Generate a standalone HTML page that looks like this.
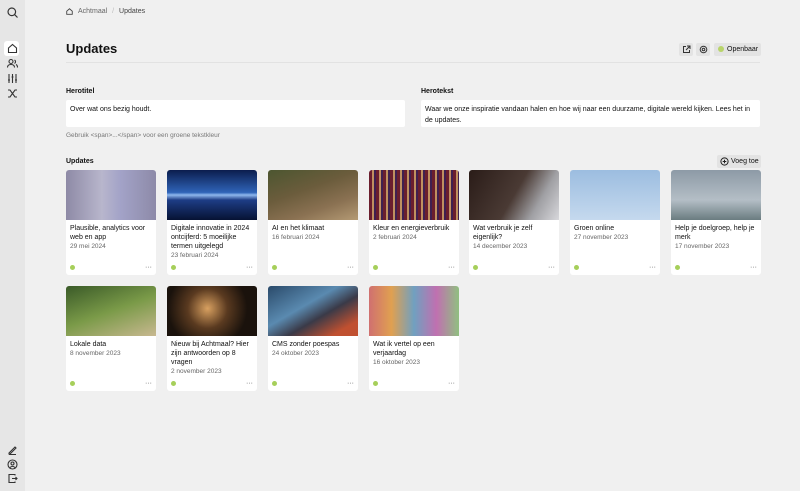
<!DOCTYPE html>
<html><head><meta charset="utf-8"><style>
*{box-sizing:border-box;margin:0;padding:0}
body{width:800px;height:491px;overflow:hidden;background:#f0f0f0;font-family:"Liberation Sans",sans-serif;color:#111;position:relative}
.sb{position:absolute;left:0;top:0;width:25px;height:491px;background:#e6e6e6}
.ic{position:absolute;left:6px;width:13px;height:13px}
.a{position:absolute}
.lbl{font-size:7px;font-weight:bold}
.inp{background:#fff;font-size:7px;line-height:11px;padding:4px 4px;border-radius:2px}
.card{position:absolute;width:90px;height:105px;background:#fff;border-radius:3px;overflow:hidden}
.card .im{height:50px}
.card .t{font-size:7px;line-height:9px;padding:4px 4px 0}
.card .d{font-size:6.5px;color:#666;padding:0 4px;line-height:9px}
.card .dot{position:absolute;left:4px;bottom:5px;width:5px;height:5px;border-radius:50%;background:#a6cf5a}
.card .m{position:absolute;right:4px;bottom:4px;font-size:7px;color:#555}
.btn{position:absolute;background:#e3e3e3;border-radius:2px;font-size:7px;line-height:13px;height:13px;white-space:nowrap}
</style></head><body>
<div class="sb">
<svg class="ic" style="top:6px" viewBox="0 0 13 13" fill="none" stroke="#333" stroke-width="1.2"><circle cx="5.8" cy="5.8" r="3.8"/><path d="M8.6 8.6L11.5 11.5"/></svg>
<div style="position:absolute;left:4px;top:41px;width:15px;height:15px;background:#fff;border-radius:3px"></div>
<svg class="ic" style="top:42px" viewBox="0 0 13 13" fill="none" stroke="#333" stroke-width="1.1"><path d="M2.5 6L6.5 2.5L10.5 6V10.5H2.5Z"/></svg>
<svg class="ic" style="top:57px" viewBox="0 0 13 13" fill="none" stroke="#333" stroke-width="1.1"><circle cx="5" cy="4.5" r="2"/><path d="M1.5 10.5c0-2 1.5-3 3.5-3s3.5 1 3.5 3M8.5 3a2 2 0 010 3.5M10 7.5c1 .5 1.5 1.5 1.5 3"/></svg>
<svg class="ic" style="top:72px" viewBox="0 0 13 13" fill="none" stroke="#333" stroke-width="1.1"><path d="M3 2v9M6.5 2v9M10 2v9M2 8h2M5.5 5h2M9 8h2"/></svg>
<svg class="ic" style="top:87px" viewBox="0 0 13 13" fill="none" stroke="#333" stroke-width="1.1"><path d="M2 3h2l5 7h2M2 10h2l5-7h2"/></svg>
<svg class="ic" style="top:443px" viewBox="0 0 13 13" fill="none" stroke="#333" stroke-width="1.1"><path d="M3 10L9 4l1 1-6 6H3zM3 11.5h7"/></svg>
<svg class="ic" style="top:458px" viewBox="0 0 13 13" fill="none" stroke="#333" stroke-width="1.1"><circle cx="6.5" cy="6.5" r="4.5"/><circle cx="6.5" cy="5.5" r="1.5"/><path d="M4 9.5c1.5-1.5 3.5-1.5 5 0"/></svg>
<svg class="ic" style="top:472px" viewBox="0 0 13 13" fill="none" stroke="#333" stroke-width="1.1"><path d="M9 3.5V2.5H3v8h6V9.5M6 6.5h5M9.5 5l1.5 1.5L9.5 8"/></svg>
</div>

<svg class="a" style="left:65px;top:7px" width="9" height="9" viewBox="0 0 13 13" fill="none" stroke="#444" stroke-width="1.3"><path d="M2.5 6L6.5 2.5L10.5 6V10.5H2.5Z"/></svg>
<div class="a" style="left:78px;top:8px;font-size:7px;color:#666">Achtmaal <span style="color:#bbb;margin:0 3px">/</span> <span style="color:#444">Updates</span></div>

<div class="a" style="left:66px;top:41px;font-size:13px;font-weight:bold">Updates</div>
<div class="a" style="left:66px;top:62px;width:694px;height:1px;background:#e2e2e2"></div>

<div class="btn" style="left:679px;top:43px;width:14px"></div>
<svg class="a" style="left:682px;top:45px" width="9" height="9" viewBox="0 0 9 9" fill="none" stroke="#333" stroke-width="1"><path d="M4 1.5H1.5v6h6V5M5 1h3v3M8 1L4 5"/></svg>
<div class="btn" style="left:696px;top:43px;width:14px"></div>
<svg class="a" style="left:699px;top:45px" width="9" height="9" viewBox="0 0 9 9" fill="none" stroke="#333" stroke-width="1"><circle cx="4.5" cy="4.5" r="1.3"/><circle cx="4.5" cy="4.5" r="3.3"/></svg>
<div class="btn" style="left:714px;top:43px;width:47px;padding-left:13px">Openbaar</div>
<div class="a" style="left:718px;top:46px;width:6px;height:6px;border-radius:50%;background:#b8d46a"></div>

<div class="a lbl" style="left:66px;top:88px">Herotitel</div>
<div class="a inp" style="left:66px;top:100px;width:339px;height:27px">Over wat ons bezig houdt.</div>
<div class="a" style="left:66px;top:132px;font-size:6.5px;color:#777">Gebruik &lt;span&gt;...&lt;/span&gt; voor een groene tekstkleur</div>
<div class="a lbl" style="left:421px;top:88px">Herotekst</div>
<div class="a inp" style="left:421px;top:100px;width:339px;height:27px">Waar we onze inspiratie vandaan halen en hoe wij naar een duurzame, digitale wereld kijken. Lees het in de updates.</div>

<div class="a lbl" style="left:66px;top:158px">Updates</div>
<div class="btn" style="left:717px;top:155px;width:44px;padding-left:14px">Voeg toe</div>
<svg class="a" style="left:720px;top:157px" width="9" height="9" viewBox="0 0 9 9" fill="none" stroke="#222" stroke-width="1"><circle cx="4.5" cy="4.5" r="3.6"/><path d="M4.5 2.7v3.6M2.7 4.5h3.6"/></svg>

<div class="card" style="left:66px;top:170px"><div class="im" style="background:linear-gradient(90deg,#8e8aa6,#b8b6cc 40%,#a3a3c8 60%,#8d8aa8)"></div><div class="t">Plausible, analytics voor web en app</div><div class="d">29 mei 2024</div><div class="dot"></div><div class="m">···</div></div>
<div class="card" style="left:167px;top:170px"><div class="im" style="background:linear-gradient(180deg,#0b1d4d,#2f64b8 45%,#8fb8ee 50%,#1e3d86 60%,#061233)"></div><div class="t">Digitale innovatie in 2024 ontcijferd: 5 moeilijke termen uitgelegd</div><div class="d">23 februari 2024</div><div class="dot"></div><div class="m">···</div></div>
<div class="card" style="left:268px;top:170px"><div class="im" style="background:linear-gradient(160deg,#4c5630,#6b5c3c 40%,#8a7152 70%,#b49a74)"></div><div class="t">AI en het klimaat</div><div class="d">16 februari 2024</div><div class="dot"></div><div class="m">···</div></div>
<div class="card" style="left:369px;top:170px"><div class="im" style="background:repeating-linear-gradient(90deg,#6b1e2e 0 3px,#c09060 3px 5px,#402050 5px 7px)"></div><div class="t">Kleur en energieverbruik</div><div class="d">2 februari 2024</div><div class="dot"></div><div class="m">···</div></div>
<div class="card" style="left:469px;top:170px"><div class="im" style="background:linear-gradient(120deg,#2a1c18,#4a3a34 50%,#a0a0a4 75%,#d8d8dc)"></div><div class="t">Wat verbruik je zelf eigenlijk?</div><div class="d">14 december 2023</div><div class="dot"></div><div class="m">···</div></div>
<div class="card" style="left:570px;top:170px"><div class="im" style="background:linear-gradient(180deg,#9cbde0,#c5d9ee)"></div><div class="t">Groen online</div><div class="d">27 november 2023</div><div class="dot"></div><div class="m">···</div></div>
<div class="card" style="left:671px;top:170px"><div class="im" style="background:linear-gradient(180deg,#8d9aa6,#b4bec6 60%,#6a7c80)"></div><div class="t">Help je doelgroep, help je merk</div><div class="d">17 november 2023</div><div class="dot"></div><div class="m">···</div></div>

<div class="card" style="left:66px;top:286px"><div class="im" style="background:linear-gradient(160deg,#3a5a28,#7a9a48 50%,#c8b890)"></div><div class="t">Lokale data</div><div class="d">8 november 2023</div><div class="dot"></div><div class="m">···</div></div>
<div class="card" style="left:167px;top:286px"><div class="im" style="background:radial-gradient(circle at 45% 45%,#d8a060,#5a3a20 35%,#1a120c 70%)"></div><div class="t">Nieuw bij Achtmaal? Hier zijn antwoorden op 8 vragen</div><div class="d">2 november 2023</div><div class="dot"></div><div class="m">···</div></div>
<div class="card" style="left:268px;top:286px"><div class="im" style="background:linear-gradient(150deg,#2a4a6a,#5a8ab0 40%,#3a3a48 60%,#c05030 85%)"></div><div class="t">CMS zonder poespas</div><div class="d">24 oktober 2023</div><div class="dot"></div><div class="m">···</div></div>
<div class="card" style="left:369px;top:286px"><div class="im" style="background:linear-gradient(90deg,#d07070,#e0a050 25%,#70a0c0 50%,#c070b0 75%,#90c080)"></div><div class="t">Wat ik vertel op een verjaardag</div><div class="d">16 oktober 2023</div><div class="dot"></div><div class="m">···</div></div>
</body></html>
